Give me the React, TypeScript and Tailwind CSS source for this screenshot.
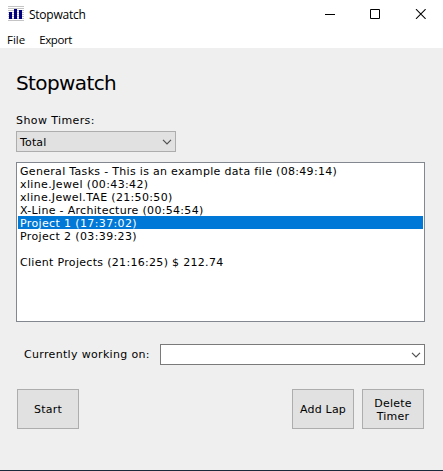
const timers = [
  { text: 'General Tasks - This is an example data file (08:49:14)', track: 'tracking-[0.31px]' },
  { text: 'xline.Jewel (00:43:42)', track: 'tracking-[0.38px]' },
  { text: 'xline.Jewel.TAE (21:50:50)', track: 'tracking-[0.33px]' },
  { text: 'X-Line - Architecture (00:54:54)', track: 'tracking-[0.31px]' },
  { text: 'Project 1 (17:37:02)', track: 'tracking-[0.37px]', selected: true },
  { text: 'Project 2 (03:39:23)', track: 'tracking-[0.37px]' },
  { text: '', track: '' },
  { text: 'Client Projects (21:16:25) $ 212.74', track: 'tracking-[0.31px]' },
];

function Chevron() {
  return (
    <svg width="10" height="6" viewBox="0 0 10 6" fill="none" stroke="#505050" strokeWidth="1.2">
      <path d="M1 .8 5 4.8 9 .8" />
    </svg>
  );
}

function AppIcon() {
  return (
    <svg width="16" height="15" viewBox="0 0 16 15" shapeRendering="crispEdges">
      <path d="M0 .5h16M0 2.5h16M0 4.5h16M0 6.5h16M0 8.5h16M0 10.5h16M0 12.5h16M0 14.5h16" stroke="#c4c4c4" />
      <path d="M1 6h3v7H1zM6 3h3v10H6zM11 4h3v9h-3z" fill="#000080" />
    </svg>
  );
}

function PushButton({ children }: { children: React.ReactNode }) {
  return (
    <button className="flex h-10 w-[62px] items-center justify-center border border-[#adadad] bg-[#e1e1e1] pt-px text-center leading-[13px] tracking-[0.2px]">
      <span>{children}</span>
    </button>
  );
}

export default function App() {
  return (
    <div className="flex h-[471px] w-[443px] flex-col overflow-hidden border-b border-[#182a3c] bg-[#efefef] font-['DejaVu_Sans',sans-serif] text-[11px] leading-[13px] text-black">
      <header className="flex h-[30px] shrink-0 bg-white font-['Open_Sans',sans-serif] text-[12px] leading-[18px]">
        <div className="pl-2 pt-1.5"><AppIcon /></div>
        <h1 className="pl-[5px] pt-1.5 tracking-[-0.25px]">Stopwatch</h1>
        <svg className="ml-auto mr-[17px] mt-[9px]" width="101" height="10" viewBox="0 0 101 10" fill="none" stroke="#000">
          <path d="M0 5.5h10" />
          <path d="M45.5.5h9v9h-9z" />
          <path d="m91 .2 9.6 9.6m0-9.6L91 9.8" strokeWidth="1.1" />
        </svg>
      </header>
      <nav className="flex h-[18px] shrink-0 gap-[14px] bg-white pl-[7px] font-['Open_Sans',sans-serif] text-[11.5px] leading-[20px]">
        <span>File</span>
        <span className="tracking-[-0.4px]">Export</span>
      </nav>
      <main className="flex grow flex-col pl-4 pr-[18px]">
        <h2 className="mt-[23px] text-[20px] leading-[24px] tracking-[-0.6px]">Stopwatch</h2>
        <label className="mt-[19px] tracking-[0.4px]">Show Timers:</label>
        <div className="mt-1 flex h-[21px] w-40 items-center justify-between border border-[#adadad] bg-[#e1e1e1] px-[3px]">
          <span className="pt-px tracking-[0.15px]">Total</span>
          <Chevron />
        </div>
        <ul className="mt-[10px] h-40 border border-[#828790] bg-white p-px">
          {timers.map((t, i) => (
            <li key={i} className={`h-[13px] whitespace-nowrap pl-0.5 leading-[15px] ${t.track} ${t.selected ? 'bg-[#0078d7] text-white' : ''}`}>
              {t.text}
            </li>
          ))}
        </ul>
        <div className="mt-[22px] flex items-center justify-between pl-2">
          <label className="tracking-[0.33px]">Currently working on:</label>
          <div className="flex h-[21px] w-[265px] items-center justify-end border border-[#7a7a7a] bg-white pr-[3px]">
            <Chevron />
          </div>
        </div>
        <div className="mt-6 flex gap-2 px-px">
          <PushButton>Start</PushButton>
          <div className="grow" />
          <PushButton>Add Lap</PushButton>
          <PushButton>Delete<br />Timer</PushButton>
        </div>
      </main>
    </div>
  );
}
